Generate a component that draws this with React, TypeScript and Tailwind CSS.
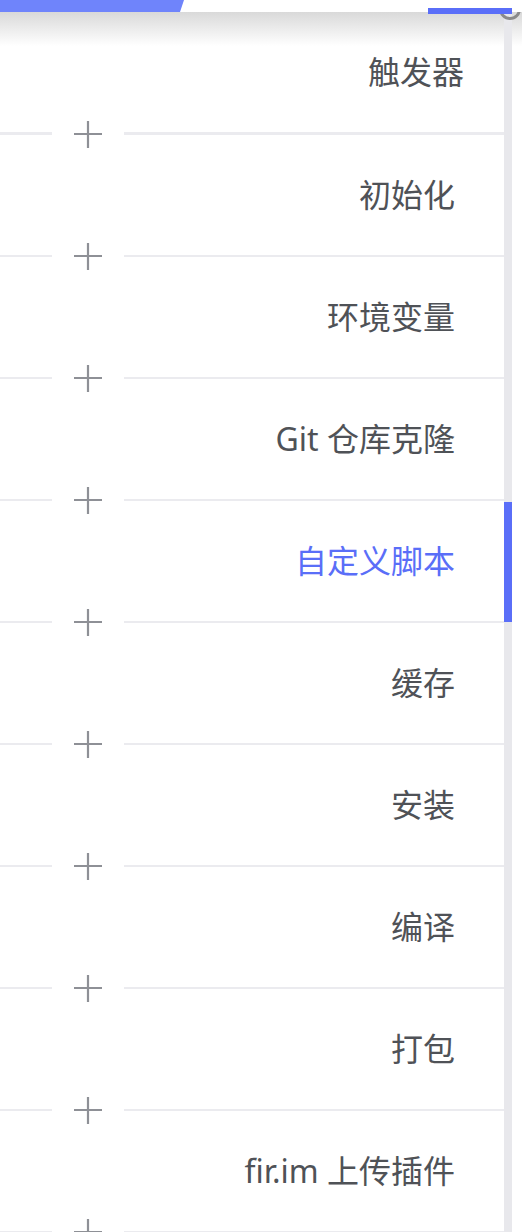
import React from "react";

interface IStep {
  name: string;
  active?: boolean;
}

const steps: IStep[] = [
  { name: "触发器" },
  { name: "初始化" },
  { name: "环境变量" },
  { name: "Git 仓库克隆" },
  { name: "自定义脚本", active: true },
  { name: "缓存" },
  { name: "安装" },
  { name: "编译" },
  { name: "打包" },
  { name: "fir.im 上传插件" },
];

const PlusIcon: React.FC = () => (
  <svg width="28" height="28" viewBox="0 0 28 28" className="shrink-0">
    <path d="M14 1v27M0 14h28" stroke="#8e9096" strokeWidth="2.2" />
  </svg>
);

const Separator: React.FC<{ thick?: boolean }> = ({ thick }) => (
  <div className={`flex items-center ${thick ? "h-[3px]" : "h-[2px]"}`}>
    <div className="w-[52px] h-full bg-[#ebebef]" />
    <div className="w-[72px] h-0 flex items-center justify-center">
      <PlusIcon />
    </div>
    <div className="flex-1 h-full bg-[#ebebef]" />
  </div>
);

const App: React.FC = () => {
  return (
    <div className="relative w-[522px] h-[1232px] overflow-hidden bg-white font-['Noto_Sans','Noto_Sans_CJK_SC',sans-serif]">
      {/* top tab strip */}
      <div className="h-[12px] flex">
        <div className="w-[184px] h-full bg-[#6f84fb] [clip-path:polygon(0_0,100%_0,calc(100%-4px)_100%,0_100%)]" />
      </div>
      <div className="absolute left-[428px] top-[8px] w-[84px] h-[6px] bg-[#5a6ef8] z-10" />

      {/* pipeline steps */}
      <div className="relative flex h-[1220px] overflow-hidden bg-[linear-gradient(to_bottom,#d9d9d9,#ffffff_34px)]">
        <div className="w-[504px] flex flex-col">
          {steps.map((step, i) => (
            <div key={step.name}>
              <div
                className={`h-[120px] flex items-center justify-end text-[32px] leading-none ${
                  i === 0 ? "pr-[40px]" : "pr-[49px]"
                } ${step.active ? "text-[#5a6ef8]" : "text-[#4f5257]"}`}
              >
                {step.name}
              </div>
              <Separator thick={i === 0} />
            </div>
          ))}
        </div>
        <div className="w-[8px] flex flex-col bg-[#e8e8ec]">
          <div className="h-[490px] shrink-0" />
          <div className="h-[120px] shrink-0 bg-[#5a6ef8]" />
        </div>
        <div className="flex-1" />
        <div className="absolute left-[499px] top-[-14px] w-[22px] h-[22px] rounded-full border-[3px] border-[#8a8a8a]" />
      </div>
    </div>
  );
};

export default App;
